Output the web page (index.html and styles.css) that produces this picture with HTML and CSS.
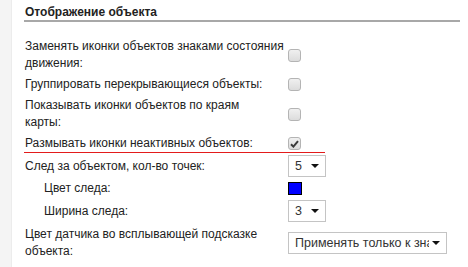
FILE: index.html
```html
<!DOCTYPE html>
<html lang="ru">
  <head>
    <meta charset="UTF-8" />
    <title>Отображение объекта</title>
    <link rel="stylesheet" href="styles.css">
  </head>
  <body>
    <div class="side"></div>
    <div class="panel">
      <div class="title">Отображение объекта</div>
      <div class="form">
        <div class="row">
          <div class="label">Заменять иконки объектов знаками состояния движения:</div>
          <div class="control"><span class="check"></span></div>
        </div>
        <div class="row">
          <div class="label">Группировать перекрывающиеся объекты:</div>
          <div class="control"><span class="check"></span></div>
        </div>
        <div class="row">
          <div class="label">Показывать иконки объектов по краям<br />карты:</div>
          <div class="control"><span class="check"></span></div>
        </div>
        <div class="row active">
          <div class="label">Размывать иконки неактивных объектов:</div>
          <div class="control">
            <span class="check">
              <svg width="9" height="8" viewBox="0 0 9 8"><path d="M1 4.2 L3.4 6.6 L8 1.2" fill="none" stroke="#3a3a3a" stroke-width="2"/></svg>
            </span>
          </div>
        </div>
        <div class="row">
          <div class="label">След за объектом, кол-во точек:</div>
          <div class="control"><div class="select small"><span class="value">5</span><span class="arrow"></span></div></div>
        </div>
        <div class="row tight">
          <div class="label sub">Цвет следа:</div>
          <div class="control"><span class="swatch"></span></div>
        </div>
        <div class="row">
          <div class="label sub">Ширина следа:</div>
          <div class="control"><div class="select small"><span class="value">3</span><span class="arrow"></span></div></div>
        </div>
        <div class="row">
          <div class="label">Цвет датчика во всплывающей подсказке объекта:</div>
          <div class="control"><div class="select wide"><span class="value">Применять только к значкам</span><span class="arrow"></span></div></div>
        </div>
      </div>
    </div>
  </body>
</html>
```

FILE: styles.css
```css
body {
  margin: 0;
  display: flex;
  height: 267px;
  font-family: 'Liberation Sans', Arial, sans-serif;
  font-size: 12px;
  color: #222;
  background-color: #ffffff;
}

.side {
  width: 11px;
  background-color: #f4f4f4;
  border-right: 1px solid #ececec;
}

.panel {
  width: 436px;
  padding-left: 12px;
}

.title {
  margin-top: 5px;
  line-height: 15px;
  font-weight: bold;
  padding-left: 1px;
  border-bottom: 2px solid #a8a8a8;
}

.form {
  margin-top: 14px;
}

.row {
  display: grid;
  grid-template-columns: 264px auto;
  align-items: center;
  padding: 2px 0;
}

.row.tight {
  padding: 1px 0;
}

.row.active {
  width: 301px;
  padding-bottom: 0;
  border-bottom: 1px solid #e31b1b;
}

.label {
  line-height: 17px;
  padding-left: 1px;
  padding-right: 4px;
}

.label.sub {
  padding-left: 20px;
}

.control {
  display: flex;
  align-items: center;
}

.check {
  width: 11px;
  height: 11px;
  border: 1px solid #b4b4b4;
  border-radius: 3px;
  background: linear-gradient(#f0f0f0, #dcdcdc);
  display: flex;
  align-items: center;
  justify-content: center;
}

.select {
  height: 20px;
  border: 1px solid #c4c4c4;
  background-color: #ffffff;
  display: flex;
  align-items: center;
  padding-left: 6px;
  color: #333;
  overflow: hidden;
}

.select.small {
  width: 30px;
}

.select.wide {
  width: 151px;
}

.select .value {
  flex: 1;
  white-space: nowrap;
  overflow: hidden;
  font-size: 12.5px;
}

.select .arrow {
  width: 0;
  height: 0;
  border-left: 4px solid transparent;
  border-right: 4px solid transparent;
  border-top: 4px solid #111;
  margin: 0 6px 0 3px;
}

.swatch {
  width: 12px;
  height: 11px;
  background-color: #0000ff;
  border: 1px solid #000;
}
```
